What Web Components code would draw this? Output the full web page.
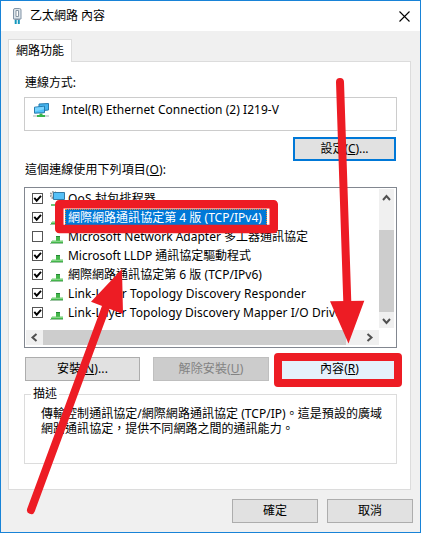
<!DOCTYPE html>
<html lang="zh-Hant"><head><meta charset="utf-8"><title>乙太網路 內容</title>
<style>
html,body{margin:0;width:421px;height:533px;overflow:hidden;font:12px/16px "Noto Sans","Noto Sans CJK TC",sans-serif;color:#000}
</style></head><body>
<network-dialog></network-dialog>
<script>
class FitText extends HTMLElement{
  connectedCallback(){
    const r=this.attachShadow({mode:'open'});
    r.innerHTML='<style>:host{display:block;white-space:nowrap;width:max-content;flex:none}span{display:inline-block;white-space:nowrap}</style><span><slot></slot></span>';
    const s=r.querySelector('span'),w=+this.getAttribute('w');
    if(w){
      const natural=s.getBoundingClientRect().width;
      const count=+this.getAttribute('chars')||[...this.textContent].length;
      s.style.letterSpacing=(w-natural)/count+'px';
      this.style.width=w+'px';
    }
  }
}
customElements.define('fit-text',FitText);

class PushButton extends HTMLElement{
  connectedCallback(){
    this.attachShadow({mode:'open'}).innerHTML=`<style>
    :host{display:flex;box-sizing:border-box;height:24px;border:1px solid #adadad;background:#e1e1e1;align-items:center;justify-content:center;flex:none}
    :host([focused]){border:2px solid #0078d7}
    :host([disabled]){background:#ccc;border-color:#bfbfbf;color:#838383}
    :host([hot]){background:#e5f1fb;border-color:#e5f1fb}
    </style><slot></slot>`;
  }
}
customElements.define('push-button',PushButton);

class AdapterIcon extends HTMLElement{
  connectedCallback(){
    this.attachShadow({mode:'open'}).innerHTML=`<style>:host{display:block;width:16px;height:16px}svg{display:block}</style>
    <svg width="16" height="16" viewBox="0 -1 16 16"><path d="M0 12h16v2H0z" fill="#d3d7d8"/><path d="M4 12h8v2H4zM6.500 10.500h3v3h-3z" fill="#38b54a"/>
    <path d="M6 1l9.500-.5v6.500l-9.500 1z" fill="#45b4ee" stroke="#277bad"/><path d="M1.500 4.200l10-1v6.500l-10 .5z" fill="#4fc0f8" stroke="#277bad"/><path d="M2 4.700l9-.9v2.500L2 8.500z" fill="#7ad4ff"/></svg>`;
  }
}
customElements.define('adapter-icon',AdapterIcon);

class ProtocolRow extends HTMLElement{
  connectedCallback(){
    const tick=this.hasAttribute('checked')?'<path d="M2.300 4.800l2.400 2.900L9 2.800" fill="none" stroke="#000" stroke-width="1.900"/>':'';
    const icon=this.hasAttribute('qos')
      ?'<circle cx="3.500" cy="5" r="3" fill="#ddd" stroke="#999" stroke-width="2" stroke-dasharray="1.500 1"/><path d="M3.500 2.500h11v7h-11z" fill="#55c0f7" stroke="#3379a3"/><path d="M1 14h13v2H1z" fill="#6cc878"/>'
      :'<path d="M1 13.500h12V15H1z" fill="#43b64a"/><path d="M6 8.500h4V13H6z" fill="#43b64a"/><path d="M6 8h4v1H6z" fill="#258535"/><path d="M2 12.500h11v1H2z" fill="#66cd67"/><path d="M0 15h13v1H0z" fill="#9fc5a5"/>';
    this.attachShadow({mode:'open'}).innerHTML=`<style>
    :host{display:flex;height:19px;align-items:center;flex:none}
    .box{width:11px;height:11px;box-sizing:border-box;margin-right:7px;flex:none}
    .icon{width:15px;height:17px;flex:none;margin-right:0}
    .label{height:17px;box-sizing:border-box;display:flex;align-items:center;padding:0 5px 0 3px;flex:none}
    :host([selected]) .label{background:#0078d7;color:#fff;outline:1px dotted #ff8728;outline-offset:-1px}
    svg{display:block}</style>
    <svg class="box" viewBox="0 0 11 11"><rect x=".5" y=".5" width="10" height="10" fill="#fff" stroke="#555"/>${tick}</svg>
    <svg class="icon" viewBox="0 0 15 17">${icon}</svg><div class="label"><slot></slot></div>`;
  }
}
customElements.define('protocol-row',ProtocolRow);

class ProtocolList extends HTMLElement{
  connectedCallback(){
    this.attachShadow({mode:'open'}).innerHTML=`<style>
    :host{display:grid;box-sizing:border-box;width:373px;height:161px;border:1px solid #828790;padding:1px;background:#fff;grid-template-columns:353px 15px;grid-template-rows:141px 15px}
    .rows{overflow:hidden;padding-left:6px}
    .v{background:#f0f0f0;display:flex;flex-direction:column;align-items:center;height:139px}
    .v svg,.h svg{flex:none}
    .v i{display:block;width:15px;height:82px;background:#cdcdcd;margin-top:25px}
    .h{display:flex;background:#f0f0f0;width:353px;align-items:center}
    .h i{height:15px;width:303px;background:#cdcdcd}
    svg{display:block;fill:none;stroke:#505050;stroke-width:2}
    </style><div class="rows"><slot></slot></div>
    <div class="v"><svg width="15" height="16"><path d="M4 11l3.500-4L11 11"/></svg><i></i><svg width="15" height="16"><path d="M4 7l3.500 4L11 7"/></svg></div>
    <div class="h"><svg width="17" height="15"><path d="M10.500 4L6.500 7.500l4 3.500"/></svg><i></i><svg width="33" height="15"><path d="M21.500 4l4 3.500-4 3.500"/></svg></div>`;
  }
}
customElements.define('protocol-list',ProtocolList);

class GroupBox extends HTMLElement{
  connectedCallback(){
    this.attachShadow({mode:'open'}).innerHTML=`<style>:host{display:block}
    fieldset{box-sizing:border-box;margin:0;border:1px solid #dcdcdc;width:373px;height:78px;padding:4px 0 0 16px;min-width:0}
    legend{padding:0 2px;margin-left:-10px;height:16px}
    .body{line-height:15px}</style>
    <fieldset><legend><slot name="title"></slot></legend><div class="body"><slot></slot></div></fieldset>`;
  }
}
customElements.define('group-box',GroupBox);

class RedMarks extends HTMLElement{
  connectedCallback(){
    this.attachShadow({mode:'open'}).innerHTML=`<style>:host{position:absolute;inset:-1px;pointer-events:none}svg{display:block}</style>
    <svg width="421" height="533" fill="none" stroke="#ed1c24" stroke-linejoin="round">
    <rect x="59.250" y="204.250" width="214.500" height="24.800" stroke-width="8.500"/>
    <rect x="278" y="357" width="120" height="26" stroke-width="8"/>
    <g stroke-width="8" stroke-linecap="round"><path d="M340 82L347.300 302M31 510L107 304"/></g>
    <path d="M330 301.300L364.300 300.700 348.500 343.500zM122 269L91 301.700 123 314z" fill="#ed1c24" stroke="none"/></svg>`;
  }
}
customElements.define('red-marks',RedMarks);

class NetworkDialog extends HTMLElement{
  connectedCallback(){
    this.attachShadow({mode:'open'}).innerHTML=`<style>
    :host{display:block;position:relative;box-sizing:border-box;width:421px;height:533px;border:1px solid #1883d7;background:#f0f0f0}
    *{box-sizing:border-box}
    header{height:30px;background:#fff;display:flex;align-items:center;padding:0 10px 0 8px}
    header fit-text{margin-left:5px}
    header svg:last-child{margin-left:auto}
    svg{display:block}
    .tab{width:64px;height:23px;margin:8px 0 -1px 7px;background:#fff;border:1px solid #dcdcdc;border-bottom:0;display:flex;align-items:center;padding-left:7px;position:relative;z-index:1}
    main{width:403px;height:429px;margin-left:7px;background:#fff;border:1px solid #dcdcdc;padding:13px 0 0 15px;display:flex;flex-direction:column}
    .adapter{margin-top:6px;width:373px;height:34px;border:1px solid #ccc;display:flex;padding:4px 0 0 8px}
    .adapter fit-text{margin-left:13px}
    .l{margin-left:1px}
    .buttons{display:flex;margin:9px 0 5px 1px;gap:13px}
    footer{display:flex;justify-content:flex-end;gap:9px;padding:9px 7px 0 0}
    u{text-underline-offset:1px;text-decoration-thickness:1px}
    </style>
    <header><svg width="16" height="20" viewBox="0 0 16 20"><path d="M4.500 4q0-1.500 1.500-1.500h4.500q1.500 0 1.500 1.500v9H4.500z" fill="#dce4ea" stroke="#8496a8"/><path d="M7 4.500h2.500v6H7z" fill="#fff" stroke="#8796a3"/><path d="M5.500 13.500H11" stroke="#8496a8" stroke-width="1"/><path d="M6.700 14v4M9.800 14v4" stroke="#1597bd" stroke-width="2"/></svg>
      <fit-text w="75">乙太網路 內容</fit-text><svg width="11" height="11"><path d="M.5.500l10 10m0-10l-10 10" stroke="#000" stroke-width="1.100"/></svg></header>
    <div class="tab"><fit-text w="48">網路功能</fit-text></div>
    <main>
      <fit-text class="l" w="51">連線方式:</fit-text>
      <div class="adapter"><adapter-icon></adapter-icon><fit-text w="217">Intel(R) Ethernet Connection (2) I219-V</fit-text></div>
      <push-button focused style="width:103px;margin:6px 0 0 269px"><fit-text w="48">設定(<u>C</u>)...</fit-text></push-button>
      <fit-text class="l" w="141" style="margin-top:1px">這個連線使用下列項目(<u>O</u>):</fit-text>
      <protocol-list style="margin-top:9px">
        <protocol-row checked qos><fit-text w="88">QoS 封包排程器</fit-text></protocol-row>
        <protocol-row checked selected><fit-text w="194">網際網路通訊協定第 4 版 (TCP/IPv4)</fit-text></protocol-row>
        <protocol-row><fit-text w="240">Microsoft Network Adapter 多工器通訊協定</fit-text></protocol-row>
        <protocol-row checked><fit-text w="183">Microsoft LLDP 通訊協定驅動程式</fit-text></protocol-row>
        <protocol-row checked><fit-text w="194">網際網路通訊協定第 6 版 (TCP/IPv6)</fit-text></protocol-row>
        <protocol-row checked><fit-text w="238">Link-Layer Topology Discovery Responder</fit-text></protocol-row>
        <protocol-row checked><fit-text w="279">Link-Layer Topology Discovery Mapper I/O Driver</fit-text></protocol-row>
      </protocol-list>
      <div class="buttons"><push-button style="width:115px"><fit-text w="51">安裝(<u>N</u>)...</fit-text></push-button><push-button disabled style="width:116px"><fit-text w="65">解除安裝(<u>U</u>)</fit-text></push-button><push-button hot style="width:115px"><fit-text w="39">內容(<u>R</u>)</fit-text></push-button></div>
      <group-box><fit-text slot="title" w="24">描述</fit-text><fit-text w="341" chars="33">傳輸控制通訊協定/網際網路通訊協定 (TCP/IP)。這是預設的廣域<br>網路通訊協定，提供不同網路之間的通訊能力。</fit-text></group-box>
    </main>
    <footer><push-button style="width:86px"><fit-text w="24">確定</fit-text></push-button><push-button style="width:86px"><fit-text w="24">取消</fit-text></push-button></footer>
    <red-marks></red-marks>`;
  }
}
customElements.define('network-dialog',NetworkDialog);
</script></body></html>
